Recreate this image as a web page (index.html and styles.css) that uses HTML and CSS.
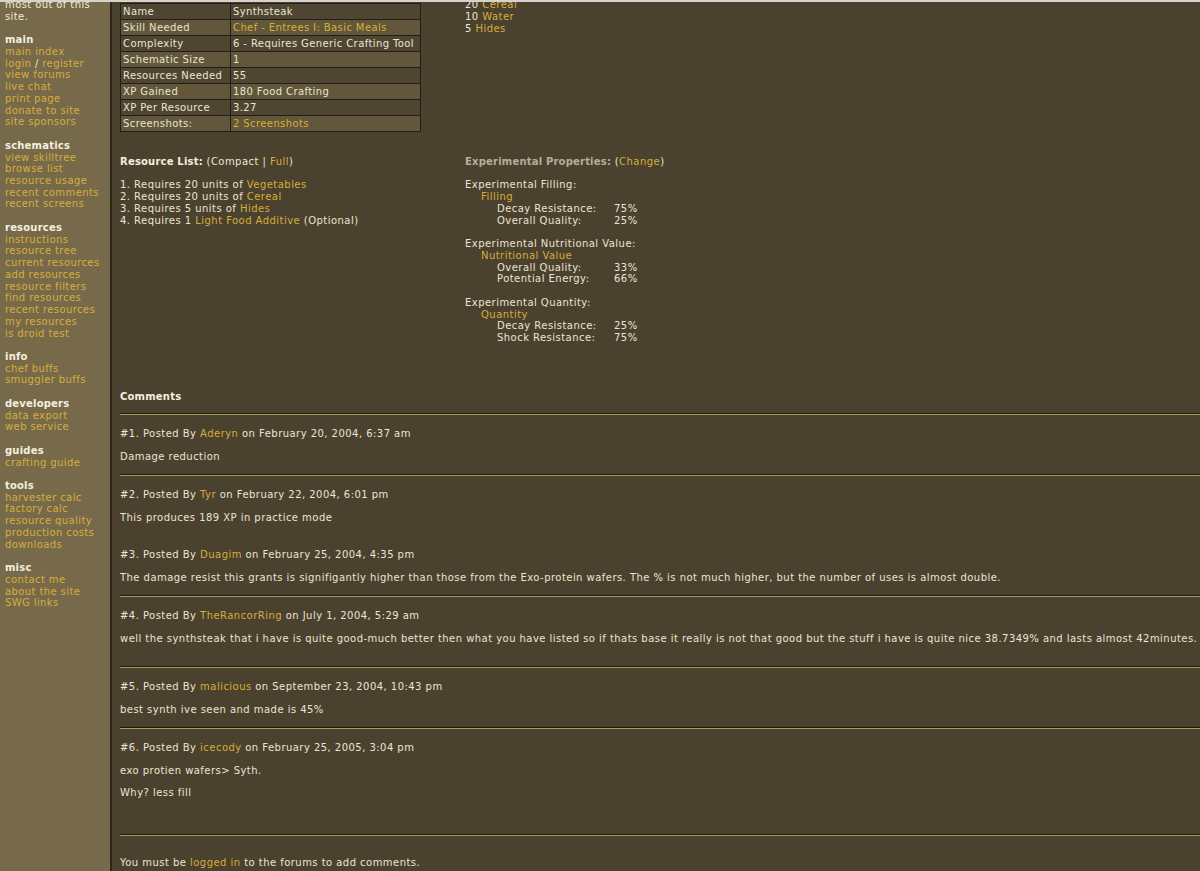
FILE: index.html
```html
<!DOCTYPE html>
<html>
<head>
<meta charset="utf-8">
<title>Synthsteak</title>
<link rel="stylesheet" href="styles.css">
</head>
<body>
<div class="topbar"></div>
<div class="page">
  <nav class="sidebar">
    <div class="intro">most out of this<br>site.</div>
    <div class="group">
      <div class="gh">main</div>
      <a href="#">main index</a>
      <div><a href="#">login</a> / <a href="#">register</a></div>
      <a href="#">view forums</a>
      <a href="#">live chat</a>
      <a href="#">print page</a>
      <a href="#">donate to site</a>
      <a href="#">site sponsors</a>
    </div>
    <div class="group">
      <div class="gh">schematics</div>
      <a href="#">view skilltree</a>
      <a href="#">browse list</a>
      <a href="#">resource usage</a>
      <a href="#">recent comments</a>
      <a href="#">recent screens</a>
    </div>
    <div class="group">
      <div class="gh">resources</div>
      <a href="#">instructions</a>
      <a href="#">resource tree</a>
      <a href="#">current resources</a>
      <a href="#">add resources</a>
      <a href="#">resource filters</a>
      <a href="#">find resources</a>
      <a href="#">recent resources</a>
      <a href="#">my resources</a>
      <a href="#">is droid test</a>
    </div>
    <div class="group">
      <div class="gh">info</div>
      <a href="#">chef buffs</a>
      <a href="#">smuggler buffs</a>
    </div>
    <div class="group">
      <div class="gh">developers</div>
      <a href="#">data export</a>
      <a href="#">web service</a>
    </div>
    <div class="group">
      <div class="gh">guides</div>
      <a href="#">crafting guide</a>
    </div>
    <div class="group">
      <div class="gh">tools</div>
      <a href="#">harvester calc</a>
      <a href="#">factory calc</a>
      <a href="#">resource quality</a>
      <a href="#">production costs</a>
      <a href="#">downloads</a>
    </div>
    <div class="group">
      <div class="gh">misc</div>
      <a href="#">contact me</a>
      <a href="#">about the site</a>
      <a href="#">SWG links</a>
    </div>
  </nav>

  <main class="main">
    <div class="top">
      <table class="info">
        <tr class="dark"><td class="lbl">Name</td><td class="val">Synthsteak</td></tr>
        <tr class="light"><td class="lbl">Skill Needed</td><td class="val"><a href="#">Chef - Entrees I: Basic Meals</a></td></tr>
        <tr class="dark"><td class="lbl">Complexity</td><td class="val">6 - Requires Generic Crafting Tool</td></tr>
        <tr class="light"><td class="lbl">Schematic Size</td><td class="val">1</td></tr>
        <tr class="dark"><td class="lbl">Resources Needed</td><td class="val">55</td></tr>
        <tr class="light"><td class="lbl">XP Gained</td><td class="val">180 Food Crafting</td></tr>
        <tr class="dark"><td class="lbl">XP Per Resource</td><td class="val">3.27</td></tr>
        <tr class="light"><td class="lbl">Screenshots:</td><td class="val"><a href="#">2 Screenshots</a></td></tr>
      </table>

      <div class="breakdown">
        <div>20 <a href="#">Vegetables</a></div>
        <div>20 <a href="#">Cereal</a></div>
        <div>10 <a href="#">Water</a></div>
        <div>5 <a href="#">Hides</a></div>
      </div>

      <div class="reslist">
        <div><b class="white">Resource List:</b> (Compact | <a href="#">Full</a>)</div>
        <ol class="req">
          <li>1. Requires 20 units of <a href="#">Vegetables</a></li>
          <li>2. Requires 20 units of <a href="#">Cereal</a></li>
          <li>3. Requires 5 units of <a href="#">Hides</a></li>
          <li>4. Requires 1 <a href="#">Light Food Additive</a> (Optional)</li>
        </ol>
      </div>

      <div class="exp">
        <div><b class="muted">Experimental Properties:</b> (<a href="#">Change</a>)</div>
        <div class="egroup">
          <div>Experimental Filling:</div>
          <div class="sub"><a href="#">Filling</a></div>
          <div class="prop"><span class="pl">Decay Resistance:</span>75%</div>
          <div class="prop"><span class="pl">Overall Quality:</span>25%</div>
        </div>
        <div class="egroup">
          <div>Experimental Nutritional Value:</div>
          <div class="sub"><a href="#">Nutritional Value</a></div>
          <div class="prop"><span class="pl">Overall Quality:</span>33%</div>
          <div class="prop"><span class="pl">Potential Energy:</span>66%</div>
        </div>
        <div class="egroup">
          <div>Experimental Quantity:</div>
          <div class="sub"><a href="#">Quantity</a></div>
          <div class="prop"><span class="pl">Decay Resistance:</span>25%</div>
          <div class="prop"><span class="pl">Shock Resistance:</span>75%</div>
        </div>
      </div>
    </div>

    <section class="comments">
      <div class="ctitle">Comments</div>
      <hr class="rule">

      <div class="chead">#1. Posted By <a href="#">Aderyn</a> on February 20, 2004, 6:37 am</div>
      <p class="cbody">Damage reduction</p>
      <hr class="rule">

      <div class="chead">#2. Posted By <a href="#">Tyr</a> on February 22, 2004, 6:01 pm</div>
      <p class="cbody">This produces 189 XP in practice mode</p>
      <hr class="rule hidden">

      <div class="chead">#3. Posted By <a href="#">Duagim</a> on February 25, 2004, 4:35 pm</div>
      <p class="cbody">The damage resist this grants is signifigantly higher than those from the Exo-protein wafers. The % is not much higher, but the number of uses is almost double.</p>
      <hr class="rule">

      <div class="chead">#4. Posted By <a href="#">TheRancorRing</a> on July 1, 2004, 5:29 am</div>
      <p class="cbody nowrap extra1">well the synthsteak that i have is quite good-much better then what you have listed so if thats base it really is not that good but the stuff i have is quite nice 38.7349% and lasts almost 42minutes.</p>
      <hr class="rule">

      <div class="chead">#5. Posted By <a href="#">malicious</a> on September 23, 2004, 10:43 pm</div>
      <p class="cbody">best synth ive seen and made is 45%</p>
      <hr class="rule">

      <div class="chead">#6. Posted By <a href="#">icecody</a> on February 25, 2005, 3:04 pm</div>
      <p class="cbody">exo protien wafers&gt; Syth.</p>
      <p class="cbody extra2">Why? less fill</p>
      <hr class="rule">

      <p class="final">You must be <a href="#">logged in</a> to the forums to add comments.</p>
    </section>
  </main>
</div>
</body>
</html>
```

FILE: styles.css
```css
:root {
  --lh: 11.73px;
  --link: #d6ae3a;
  --text: #ebe5d1;
}

html, body {
  margin: 0;
  padding: 0;
  height: 100%;
  overflow: hidden;
}

body {
  font-family: "DejaVu Sans", Verdana, sans-serif;
  font-size: 10px;
  letter-spacing: 0.46px;
  line-height: var(--lh);
  color: var(--text);
  background: #4b412f;
}

a {
  color: var(--link);
  text-decoration: none;
}

.topbar {
  height: 2px;
  background: #d6d3cc;
  position: relative;
  z-index: 2;
}

.page {
  display: flex;
  height: calc(100% - 2px);
}

/* ---------- sidebar ---------- */
.sidebar {
  flex: none;
  width: 112px;
  background: #776a4b;
  border-right: 2px solid #2c261b;
  padding-left: 5px;
  box-sizing: border-box;
  overflow: hidden;
  letter-spacing: 0.4px;
}

.intro {
  margin-top: -3px;
  color: #f0ead8;
}

.group {
  margin-top: var(--lh);
}

.group a {
  display: block;
}

.group div a {
  display: inline;
}

.gh {
  font-weight: bold;
  color: #f4efde;
  letter-spacing: 0.2px;
}

/* ---------- main ---------- */
.main {
  flex: 1;
  min-width: 0;
  padding-left: 8px;
  overflow: hidden;
}

.top {
  display: grid;
  grid-template-columns: 345px auto;
  row-gap: 24px;
  align-items: start;
}

.info {
  border-collapse: collapse;
  border: 1px solid #241f15;
  width: 301px;
  margin-top: 1px;
  letter-spacing: 0.4px;
}

.info td {
  border: 1px solid #241f15;
  height: 15px;
  padding: 0 2px;
  line-height: 15px;
  white-space: nowrap;
}

.info .lbl {
  width: 105px;
}

.info tr.dark td {
  background: #4f4533;
}

.info tr.light td {
  background: #62563b;
}

.breakdown {
  margin-top: -14.5px;
}

.white {
  color: #f4efde;
  letter-spacing: 0.2px;
}

.muted {
  color: #b7ae98;
  letter-spacing: 0.2px;
}

.req {
  list-style: none;
  margin: var(--lh) 0 0 0;
  padding: 0;
}

.egroup {
  margin-top: var(--lh);
}

.sub {
  padding-left: 16px;
}

.prop {
  padding-left: 32px;
}

.pl {
  display: inline-block;
  width: 117px;
}

/* ---------- comments ---------- */
.comments {
  margin-top: 47px;
}

.ctitle {
  font-weight: bold;
  color: #f4efde;
  letter-spacing: 0.2px;
}

.rule {
  border: 0;
  border-top: 1px solid #1f1a11;
  border-bottom: 1px solid #b09850;
  height: 0;
  margin: 11px 0 13px 0;
}

.rule.hidden {
  border-color: transparent;
}

.chead {
  margin: 0;
}

.cbody {
  margin: 11px 0 0 0;
}

.nowrap {
  white-space: nowrap;
}

.extra1 {
  padding-bottom: 11px;
}

.extra2 {
  padding-bottom: 24px;
}

.final {
  margin: 21px 0 0 0;
}
```
